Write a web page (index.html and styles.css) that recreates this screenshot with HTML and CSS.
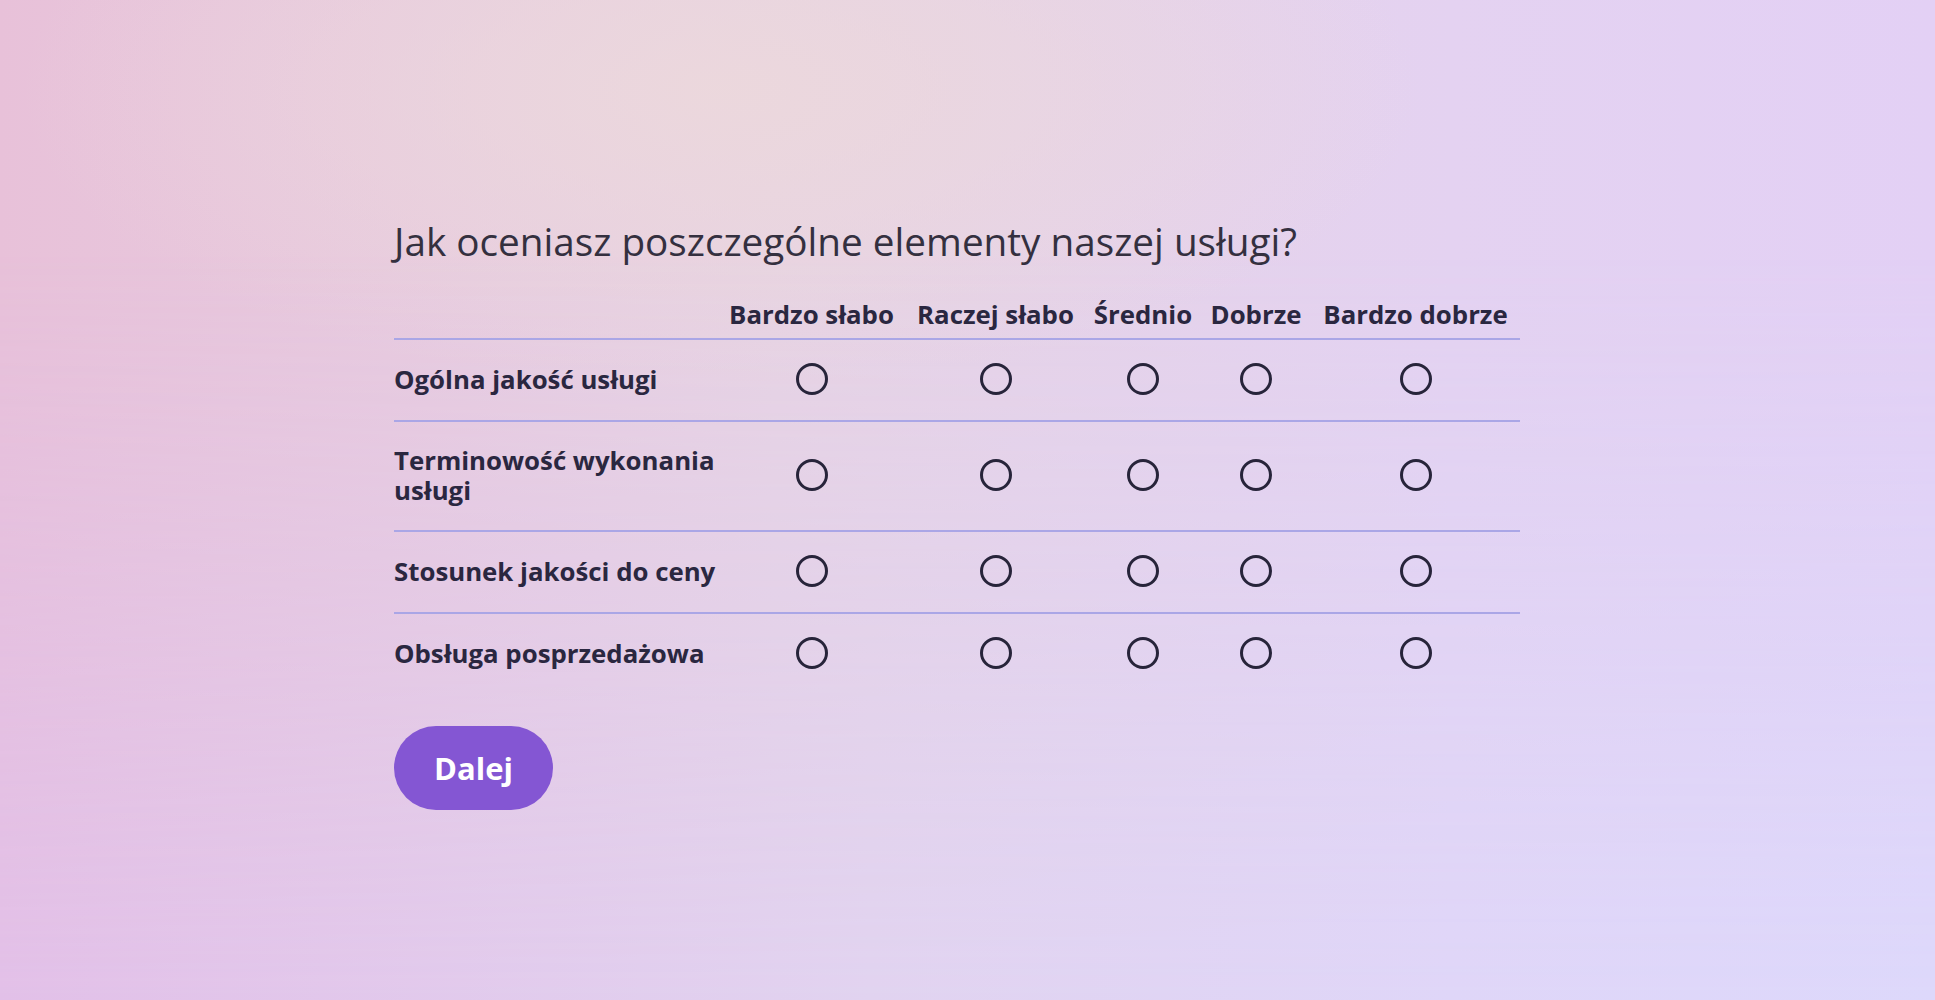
FILE: index.html
```html
<!DOCTYPE html>
<html lang="pl">
<head>
<meta charset="utf-8">
<title>Ankieta</title>
<link rel="stylesheet" href="styles.css">
</head>
<body>
<div class="bg-layer"></div>
<main class="survey">
  <h1 class="question">Jak oceniasz poszczególne elementy naszej usługi?</h1>
  <div class="matrix" role="table">
    <div class="row head" role="row">
      <div class="cell label" role="columnheader"></div>
      <div class="cell col" role="columnheader">Bardzo słabo</div>
      <div class="cell col" role="columnheader">Raczej słabo</div>
      <div class="cell col" role="columnheader">Średnio</div>
      <div class="cell col" role="columnheader">Dobrze</div>
      <div class="cell col" role="columnheader">Bardzo dobrze</div>
    </div>
    <div class="row" role="row">
      <div class="cell label" role="rowheader">Ogólna jakość usługi</div>
      <div class="cell opt"><input class="radio" type="radio" name="r1"></div>
      <div class="cell opt"><input class="radio" type="radio" name="r1"></div>
      <div class="cell opt"><input class="radio" type="radio" name="r1"></div>
      <div class="cell opt"><input class="radio" type="radio" name="r1"></div>
      <div class="cell opt"><input class="radio" type="radio" name="r1"></div>
    </div>
    <div class="row" role="row">
      <div class="cell label" role="rowheader">Terminowość wykonania usługi</div>
      <div class="cell opt"><input class="radio" type="radio" name="r2"></div>
      <div class="cell opt"><input class="radio" type="radio" name="r2"></div>
      <div class="cell opt"><input class="radio" type="radio" name="r2"></div>
      <div class="cell opt"><input class="radio" type="radio" name="r2"></div>
      <div class="cell opt"><input class="radio" type="radio" name="r2"></div>
    </div>
    <div class="row" role="row">
      <div class="cell label" role="rowheader">Stosunek jakości do ceny</div>
      <div class="cell opt"><input class="radio" type="radio" name="r3"></div>
      <div class="cell opt"><input class="radio" type="radio" name="r3"></div>
      <div class="cell opt"><input class="radio" type="radio" name="r3"></div>
      <div class="cell opt"><input class="radio" type="radio" name="r3"></div>
      <div class="cell opt"><input class="radio" type="radio" name="r3"></div>
    </div>
    <div class="row last" role="row">
      <div class="cell label" role="rowheader">Obsługa posprzedażowa</div>
      <div class="cell opt"><input class="radio" type="radio" name="r4"></div>
      <div class="cell opt"><input class="radio" type="radio" name="r4"></div>
      <div class="cell opt"><input class="radio" type="radio" name="r4"></div>
      <div class="cell opt"><input class="radio" type="radio" name="r4"></div>
      <div class="cell opt"><input class="radio" type="radio" name="r4"></div>
    </div>
  </div>
  <button class="next" type="button">Dalej</button>
</main>
</body>
</html>
```
FILE: styles.css
```css
html, body {
  margin: 0;
  height: 100%;
}
body {
  position: relative;
  overflow: hidden;
  font-family: "Open Sans", "Noto Sans", sans-serif;
  color: #2a2740;
  background:
    radial-gradient(ellipse 700px 300px at 720px 90px, rgba(236, 216, 220, 0.9), rgba(236, 216, 220, 0) 100%),
    linear-gradient(to right, #e8c1d9 0%, #e7d3e3 40%, #e4d2f1 75%, #e3d0f5 100%);
}
.bg-layer {
  position: absolute;
  inset: 0;
  background: linear-gradient(to right, #e2c0e8 0%, #e1d3f0 45%, #dfd6f8 75%, #ddd8fb 100%);
  -webkit-mask-image: linear-gradient(to bottom, transparent 25%, black 100%);
  mask-image: linear-gradient(to bottom, transparent 25%, black 100%);
  pointer-events: none;
}
.survey {
  position: relative;
  width: 1126px;
  margin: 0 auto;
  padding: 215px 21px 0 0;
}
.question {
  margin: 0 0 31px;
  font-size: 38.7px;
  font-weight: 400;
  line-height: 53px;
  color: #34303f;
}
.matrix {
  display: flex;
  flex-direction: column;
}
.row {
  display: grid;
  grid-template-columns: 323px 189px 179px 116px 110px 209px;
  align-items: center;
  border-bottom: 2px solid #aaa6e6;
}
.row.last {
  border-bottom: none;
}
.cell {
  font-size: 25.8px;
  font-weight: 700;
  line-height: 30px;
}
.head .cell {
  padding-bottom: 9px;
  text-align: center;
  white-space: nowrap;
}
.row:not(.head) .cell {
  padding: 23px 0 25px;
}
.label {
  text-align: left;
  margin-right: -12px;
}
.opt {
  display: flex;
  justify-content: center;
  align-items: center;
}
.radio {
  appearance: none;
  -webkit-appearance: none;
  width: 32px;
  height: 32px;
  margin: 0;
  border: 3px solid #27243a;
  border-radius: 50%;
  background: transparent;
  box-sizing: border-box;
}
.next {
  margin-top: 32px;
  width: 159px;
  height: 84px;
  border: none;
  border-radius: 42px;
  background: #8456d3;
  color: #ffffff;
  font-family: "Open Sans", "Noto Sans", sans-serif;
  font-size: 31px;
  font-weight: 700;
  cursor: pointer;
}
```
